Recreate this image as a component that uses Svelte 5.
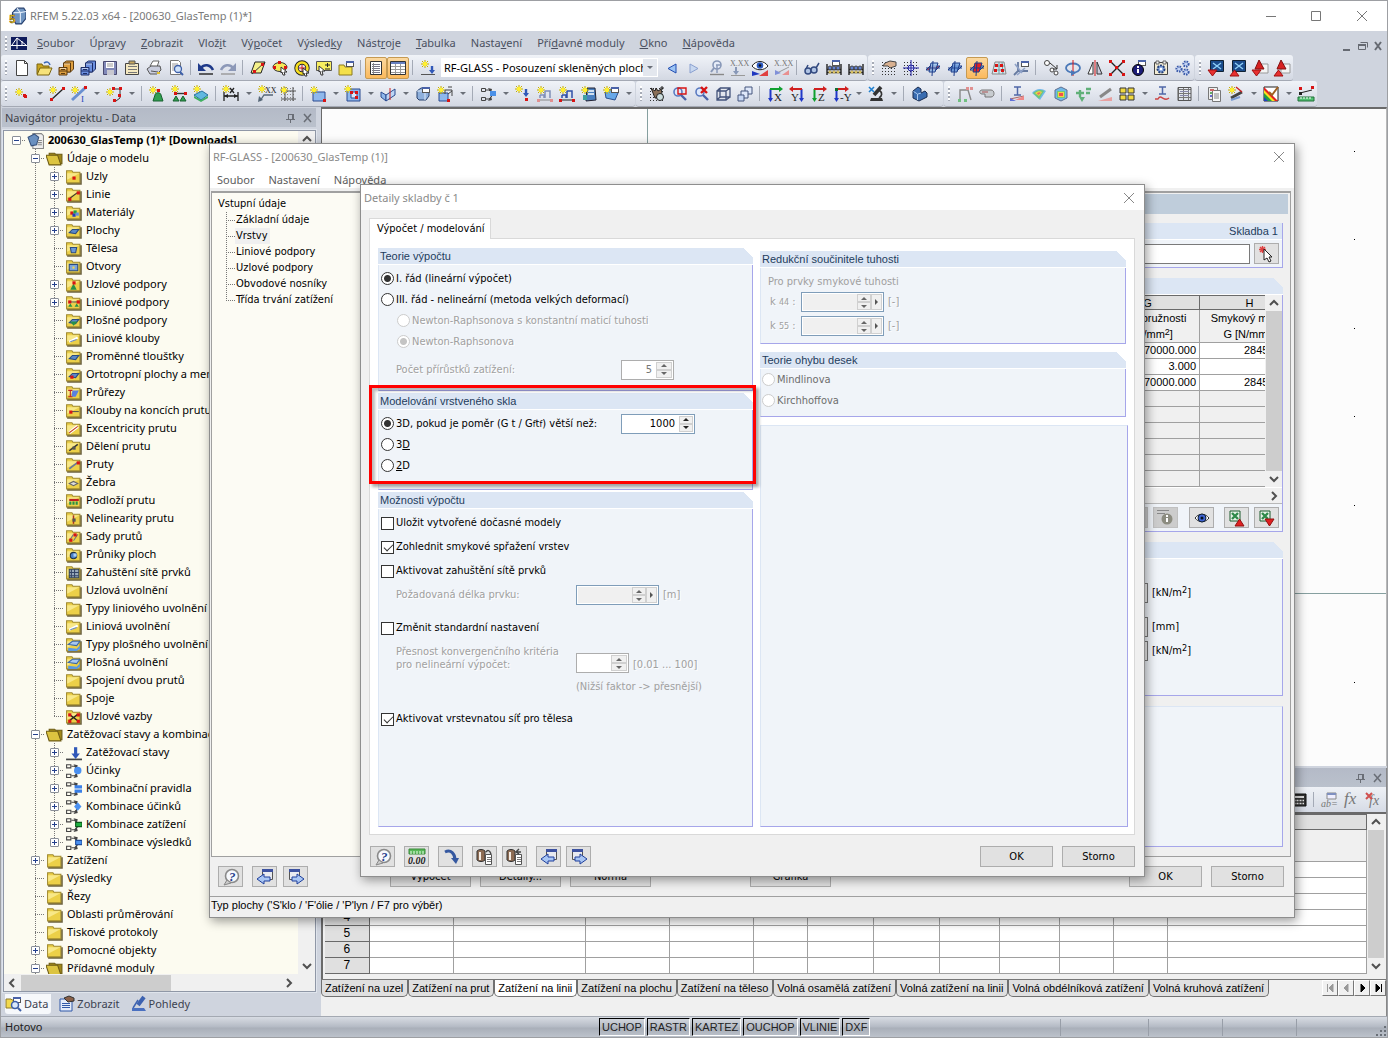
<script>
  // ---- small drawing helpers, all on a 16 x 16 grid ----
  const star = (x, y) =>
    `<path d="M${x} ${y - 4}v8M${x - 4} ${y}h8M${x - 3} ${y - 3}l6 6M${x + 3} ${y - 3}l-6 6" stroke="#c4ac00" stroke-width="1"/><circle cx="${x}" cy="${y}" r="2.300" fill="#fff030"/>`;
  const dot = (x, y, c = '#d81414') => `<rect x="${x}" y="${y}" width="3" height="3" fill="${c}"/>`;
  const ln = (d, c = '#303030', w = 1) => `<path d="${d}" stroke="${c}" stroke-width="${w}" fill="none"/>`;
  const fl = (d, c, s = 'none') => `<path d="${d}" fill="${c}" stroke="${s}"/>`;
  const tx = (x, y, s, t, c = '#222') =>
    `<text x="${x}" y="${y}" font-size="${s}" font-family="Liberation Serif, serif" fill="${c}">${t}</text>`;
  const winBox = (x, y) =>
    `<rect x="${x}.5" y="${y}.5" width="7" height="5" fill="#fff" stroke="#555"/><path d="M${x} ${y + 1}h8" stroke="#4a62a8" stroke-width="2"/>`;
  const folder = ln('M15 5v10H2', '#6b6240', 1.6) + fl('M1.500 2.500h5l1 1.500h6.500v10h-12.500z', '#ecd048', '#a08a30') + fl('M2 5h11.500L2 11z', '#f8e888');
  const comb = ln('M1.500 2.500h4v3h-4zM1.500 11.500h4v3h-4z', '#444') + ln('M6 4h3l3 3M6 13h3l3-3', '#444') + fl('M8 2l4 1-1 4zM8 15l4-1-1-4z', '#444');
  const magn = (c = '#5a7ac0') => `<circle cx="7" cy="6" r="4" fill="#dfe9fb" stroke="${c}" stroke-width="1.600"/>` + ln('M10 9l5 5', '#4a62a8', 2.4);
  const plane = (top, side) =>
    fl('M1 10l4-4h10l-4 4z', top, '#1c3c8a') + fl('M6 3h7l-3 9H4z', side, '#1c3c8a') + ln('M1 8h14M8 1l-1 15', '#1c3c8a');
  const axis = (l, v, h, left) =>
    (left ? ln('M12.500 3v11', v, 2) + ln('M13 3H3', h, 2) + fl('M0 3l4-3v6z', h) : ln('M3.500 3v11', v, 2) + ln('M3 3h10', h, 2) + fl('M16 3l-4-3v6z', h)) +
    (left ? fl('M10 12h5l-2.500 4z', v) + tx(2, 15, 11, l) : fl('M1 12h5l-2.500 4z', v) + tx(7, 15, 11, l));
  const cab = (a, b) =>
    fl('M5.500 3l3-2h7v8l-3 3h-7z', a, b) + fl('M5.500 3h7v9h-7z', a, b) + ln('M6 4h6', '#fff8') + fl('M1 7.500h8v7.500H1z', a, b) + ln('M1 11h8M3 9.500h4M3 13.500h4', b) + ln('M2 8.500h6', '#fff8');
  const cube = (c) => fl('M2 5l4-3h8v8l-3 4H4l-2-2z', c, '#26406e') + ln('M2 5h8v9M10 5l4-3', '#dfeaf8');
  const load = ln('M1 14.500h15', '#444', 1.6) + ln('M10 3v7', '#3058b8', 3) + fl('M6 9h8l-4 5z', '#3058b8');
  const redTri = (up) => (up ? fl('M4.500 10l4.500 6H0z', '#e83030', '#a01010') : fl('M4.500 16L9 10H0z', '#e83030', '#a01010'));
  const people = (c) =>
    ln('M1 4v11M15 4v11M1 12.500h14M1 9.500h14', '#222', 1.4) + [4, 8, 12].map((x) => `<circle cx="${x}" cy="8" r="2" fill="${c}" stroke="#444"/><circle cx="${x}" cy="12" r="1.500" fill="#d8c060"/>`).join('');
  const cell = ln('M2 3.500h13M2 7.500h13M2 11.500h13', '#777') + ln('M2.500 2v13M7.500 2v13M12.500 2v13', '#777') + ln('M2 1.500h13v13h-13z', '#555');
  const dots = Array.from({ length: 25 }, (_, i) => `<rect x="${1 + (i % 5) * 3}" y="${2 + Math.floor(i / 5) * 3}" width="1" height="1" fill="#333"/>`).join('');

  const I = {
    page: fl('M2.500 .5h8l3 3v12h-11z', '#fff', '#444') + ln('M10.500 .5v3h3', '#444'),
    open: fl('M1 4h5l1 2h6v8H1z', '#c9a520', '#7a6410') + fl('M4 8h12l-3 7H1z', '#f6e27a', '#7a6410') + ln('M8 3c3-2 5-1 6 2', '#3a68b8', 1.6),
    cabA: cab('#dfa040', '#5e3c10'), cabB: cab('#6c90e0', '#1c2c66'),
    save: fl('M1.500 1.500h13v13h-13z', '#8088b8', '#4a4a70') + fl('M4 2h8v6H4z', '#fff') + fl('M5 10h7v5H5z', '#c8c8d0') + ln('M5 4h6M5 6h6', '#999'),
    clip: fl('M1.500 3.500h13v11h-13z', '#f4e8c0', '#444') + ln('M4 6.500h9M4 9.500h9M4 12.500h9', '#777') + fl('M5 1h6v3H5z', '#c8a860', '#555'),
    print: fl('M4 6l3-5h6l-2 6z', '#fff', '#666') + fl('M1 9l4-3h9l1 4-4 4H4z', '#c9cddd', '#555') + ln('M5 11l7 1', '#555') + fl('M11 12h3v2h-3z', '#e0c030'),
    preview: fl('M2.500 .5h8l2 2v12h-10z', '#fff', '#777') + ln('M4 4h6M4 6h4M4 8h4M4 10h4', '#999') + '<circle cx="10" cy="9" r="3.500" fill="#cfe2fa" stroke="#3d5fa8" stroke-width="1.300"/>' + ln('M12 12l3 3', '#3d5fa8', 2),
    undo: ln('M3 8c3-4 9-4 12 2', '#1f3a8a', 2.6) + fl('M0 3v8h8z', '#1f3a8a') + ln('M1 14h14', '#222', 1.4),
    redo: ln('M13 8C10 4 4 4 1 10', '#8c98b8', 2.6) + fl('M16 3v8H8z', '#8c98b8') + ln('M1 14h14', '#999', 1.4),
    para: fl('M5 2h10l-4 11H1z', '#f4f08a', '#222') + ln('M2 14L15 2', '#333') + dot(3, 10) + dot(11, 3),
    ell: '<ellipse cx="8" cy="7" rx="7" ry="4.500" fill="#f6e85a" stroke="#333"/>' + dot(6, 1) + dot(1, 6) + dot(12, 6) + fl('M9 7l6 5-3 0 1 3-2 0-1-3-1 1z', '#fff', '#333'),
    ring: '<circle cx="8" cy="8" r="5.500" fill="none" stroke="#222" stroke-width="4.400"/><circle cx="8" cy="8" r="5.500" fill="none" stroke="#f8e020" stroke-width="2.600"/>' + ln('M8 5v6M5 8h6', '#d81414') + fl('M9 8l6 5-3 0 1 3-2 0-1-3-1 1z', '#fff', '#333'),
    pm: fl('M.5 1.500h15v9H.5z', '#f8ee60', '#555') + ln('M9 5h5M11.500 3v4M9 9h5', '#222') + fl('M3 6l6 5-3 0 1 4-2 0-1-4-1 1z', '#fff', '#333'),
    fwin: fl('M1 5h5l1 2h7v8H1z', '#f4e04a', '#8b7b20') + winBox(8, 1),
    list: fl('M2.500 1.500h11v13h-11z', '#fff', '#333') + ln('M4 4.500h8M4 6.500h8M4 8.500h8M4 10.500h8M4 12.500h8', '#778') + ln('M5.500 3v11', '#888'),
    grid: fl('M.5 1.500h15v13H.5z', '#fff', '#333') + fl('M1 2h14v2H1z', '#6880c0') + ln('M1 6.500h14M1 9.500h14M1 12.500h14M5.500 4v10M10.500 4v10', '#999'),
    starload: star(5, 4) + ln('M1 14.500h14', '#555') + ln('M12 6v5', '#3058b8', 2.4) + fl('M9 10h6l-3 4z', '#3058b8'),
    prev: fl('M12 4v9L4 8.500z', '#9cc4f4', '#1f4bb0'), next: fl('M4 4v9l8-4.500z', '#c8d8f0', '#8aa0d0'),
    look: '<circle cx="9" cy="5" r="4" fill="#e6ecf8" stroke="#8898b8" stroke-width="1.600"/>' + ln('M6 8l-3 4', '#8898b8', 2) + ln('M8 5h5M9 5v8', '#8898b8', 1.4) + ln('M2 14.500h14', '#888', 1.4),
    xld: tx(0, 6, 8, 'X.XX', '#777') + ln('M6 7v5', '#8898b8', 2) + fl('M3 11h6l-3 4z', '#8898b8') + ln('M1 15.500h14', '#999'),
    eye: fl('M0 6c4-6 12-6 16 0-4 5-12 5-16 0z', '#fff', '#222') + '<circle cx="8" cy="5.500" r="3.300" fill="#2a58c0"/><circle cx="8" cy="5.500" r="1.300" fill="#111"/>' + fl('M0 16v-5l8 3z', '#2038c0') + fl('M16 10v6H7z', '#e04040'),
    xx: tx(0, 6, 8, 'X.XX', '#777') + ln('M1 14L15 7', '#999') + fl('M1 10v5l6-2z', '#8090d8') + fl('M15 10v5H8z', '#e89090'),
    glasses: '<circle cx="4" cy="11" r="3" fill="#b0c4e4" stroke="#334a80" stroke-width="1.500"/><circle cx="10" cy="10" r="3" fill="#b0c4e4" stroke="#334a80" stroke-width="1.500"/>' + ln('M12 8l3-5M2 9l2-4', '#334a80', 1.5),
    peo1: people('#6080d0') + winBox(6, 0), peo2: people('#6080d0'),
    hand: dots + fl('M4 3l5-2 6 1v4l-6 2-2-2H2z', '#d8b090', '#444'),
    gridc: dots + '<circle cx="8" cy="8" r="3" fill="#dfe6fb" stroke="#2020a0"/>' + ln('M8 0v16M0 8h16', '#2020a0'),
    pl1: plane('#e85050', '#9cc4eecc'), pl2: plane('#9cc4ee', '#6fa0e0cc'), pl3: plane('#9cc4ee', '#e82020'),
    mesh: fl('M4 2h9l2 12H1z', '#dde4ea', '#888') + ln('M3 6h11M2 10h12M8 2v12M11 2l1 12', '#68a0a8') + dot(4, 4) + dot(9, 4) + dot(3, 9) + dot(10, 9),
    xwin: ln('M5 2v9h10M5 11l-4 4', '#667aa0', 1.8) + ln('M2 4l7 9M12 8L4 15', '#8fa2c8', 1.6) + winBox(8, 1),
    copy: '<circle cx="4" cy="3" r="2.500" fill="#fff" stroke="#444"/><circle cx="9" cy="10" r="2" fill="#fff" stroke="#444"/><circle cx="13" cy="13" r="2" fill="#fff" stroke="#444"/>' + ln('M7 3l7 6M14 5v4h-4', '#333'),
    rot: '<ellipse cx="8" cy="8" rx="7" ry="4.500" fill="none" stroke="#4a78b8" stroke-width="1.800"/>' + ln('M8 0v16', '#d81414', 1) + fl('M6 10l5 3-5 3z', '#4a78b8'),
    mir: fl('M6 2v12H1z', '#fff', '#333') + fl('M10 2v12h5z', '#ccd', '#333') + ln('M8 0v16', '#d81414'),
    cross: ln('M2 2l12 12M14 2L2 14', '#222', 1.4) + dot(0, 0) + dot(13, 0) + dot(0, 13) + dot(13, 13) + dot(6, 6),
    info: winBox(7, 0) + '<circle cx="7" cy="10" r="5.500" fill="#1c1c78" stroke="#000"/>' + ln('M7 6v2M7 9v4', '#fff', 2),
    gear: fl('M1.500 2.500h13v12h-13z', '#f3ecd4', '#444') + fl('M3 1h3v3H3zM10 1h3v3h-3z', '#eee', '#666') + '<circle cx="8" cy="9" r="3.500" fill="#88a8e0" stroke="#24407c" stroke-width="2" stroke-dasharray="2 1"/><circle cx="8" cy="9" r="1.300" fill="#fff"/>',
    gears: ['4 9', '11 4', '11 12'].map((p) => { const [x, y] = p.split(' '); return `<circle cx="${x}" cy="${y}" r="2.600" fill="#c4d4f4" stroke="#3858a8" stroke-width="2" stroke-dasharray="1.500 1"/>`; }).join(''),
    scrD: fl('M2.500 .5h13v11h-13z', '#1a4c8c', '#123') + ln('M5 3l8 6M13 3l-8 6', '#8fd0f8', 1.4) + redTri(false), scrU: fl('M2.500 .5h13v11h-13z', '#1a4c8c', '#123') + ln('M5 3l8 6M13 3l-8 6', '#8fd0f8', 1.4) + redTri(true),
    redD: fl('M7 4h9v9H7z', '#f4f4f4', '#999') + fl('M7 0l5 9H3z', '#d82020', '#801010') + redTri(false), redU: fl('M7 4h9v9H7z', '#f4f4f4', '#999') + fl('M7 0l5 9H3z', '#d82020', '#801010') + redTri(true),
    nNode: star(5, 6) + dot(9, 8) + dot(10, 9), nLine: ln('M2 14L14 3', '#222', 1.3) + star(4, 4) + dot(1, 12) + dot(13, 1),
    nMem: ln('M1 14L14 2', '#6a90d0', 3) + star(4, 4) + dot(13, 0) + tx(10, 16, 9, 'I', '#24b'), nSet: star(4, 6) + ln('M7 3h7v9l-4 3', '#333') + dot(6, 1) + dot(13, 1) + dot(12, 8) + dot(7, 13),
    supN: star(4, 4) + dot(8, 3) + fl('M6 9c0-3 6-3 6 0l2 6H4z', '#30a050', '#186030'), supL: star(4, 3) + ln('M4 7.500h10', '#333', 1.4) + dot(3, 6) + dot(13, 6) + fl('M5 10l3 5H2zM12 10l3 5H9z', '#30a050', '#186030'), supS: star(4, 3) + fl('M1 9l8-4 6 4-7 5z', '#60b8e0', '#2870a0') + fl('M1 10l7 4 7-4v2l-7 4-7-4z', '#40b060'),
    dim: star(3, 3) + ln('M1 6v9M15 6v9M1 10h14', '#222', 1.3) + ln('M7 2l4 5M11 2L7 7', '#222', 1.3) + fl('M1 10l4-2v4zM15 10l-4-2v4z', '#222'), com: star(4, 3) + tx(7, 7, 8, 'XX') + ln('M2 15l4-6h9', '#567', 1.3) + fl('M0 16l1-6 4 4z', '#567'), frame: dots.replaceAll('#333', '#888') + ln('M5 1v14M13 1v14M1 5h15M1 13h15', '#555') + star(4, 4),
    nSurf: fl('M3 6h12v9H3z', '#8fb8ec', '#2a4a90') + star(4, 4) + dot(13, 13), nOpen: fl('M2 3h13v12H2z', '#8fb8ec', '#2a4a90') + fl('M6 6h6v6H6z', '#dbe8f8', '#2a4a90') + star(3, 3) + dot(5, 5) + dot(10, 10) + dot(10, 5),
    fold: fl('M1 6l5 3v6l-5-4z', '#8fb8ec', '#2a4a90') + fl('M6 9l9-6v6l-9 6z', '#bcd6f6', '#2a4a90') + ln('M10 2v12', '#c22'), sol: cube('#8fb0dc') + winBox(7, 1), nSol: fl('M2 7h9v8H2z', '#8fb8ec', '#2a4a90') + ln('M8 4h7v6M8 4v4M11 1h4M11 8l4-3', '#444') + star(4, 4) + dot(10, 13),
    combI: comb + fl('M10 5h6v5h-6z', '#4a90e8'), nLoad: star(4, 3) + ln('M11 3v6', '#3058b8', 2.4) + fl('M8 7h6l-3 4z', '#3058b8') + dot(10, 12),
    ld1: star(4, 4) + ln('M3 9v3M3 9h4v3M8 5v7M8 5h5v7', '#8090b8', 1.5) + ln('M1 14h14', '#888') + dot(0, 13, '#e09090') + dot(13, 13, '#e09090'), ld2: star(4, 4) + ln('M3 9v3M3 9h4v3M8 5v7M8 5h5v7', '#3050a8', 1.5) + ln('M1 14h14', '#222') + dot(0, 13) + dot(13, 13),
    cabS: fl('M6 2h8l1 12-10 1z', '#4a80c0', '#223') + ln('M7 5h6M7 8h6', '#fff', 1.5) + star(4, 4) + fl('M2 9h4v5H2z', '#40a0a0'), surfW: fl('M2 6l6-3 7 4-3 7-9-2z', '#68a8e8', '#2a5090') + star(4, 4) + winBox(8, 1),
    grab: dots + fl('M2 2l4 3 1-3 2 3 3-2 1 4-3 5H6z', '#8a7058', '#222') + '<circle cx="11" cy="11" r="3.500" fill="#cdd" stroke="#222"/>' + ln('M11 2h4M13 0v4', '#222'), zoomR: magn() + ln('M7 2h8v6H7z', '#d81414', 1.4), zoomX: magn() + ln('M8 1l6 6M14 1L8 7', '#d81414', 2.4),
    box: ln('M2 5h9v9H2zM5 2h10v9H5M2 5l3-3M11 5l4-3M11 14l4-3M5 2v9M2 14l3-3', '#44547c', 1.3), boxes: fl('M8 1h7v7H8z', '#dfe8fa', '#44547c') + fl('M4 5h7v7H4z', '#dfe8fa', '#44547c') + fl('M1 9h6v6H1z', '#c8d8f4', '#44547c'),
    axX: axis('X', '#2038c8', '#10a030'), axY: axis('Y', '#2038c8', '#d02020', true), axZ: axis('Z', '#10a030', '#d02020'), axM: axis('-Y', '#2038c8', '#d02020') + dot(2, 2, '#107030'),
    micro: ln('M1 1l5 5M6 1L1 6', '#2080d0', 1.6) + ln('M13 1L6 9', '#333', 3.6) + ln('M11 4c4 3 3 6 0 8', '#333', 1.6) + fl('M3 12h11l1 3H2z', '#333'), pen: fl('M2 5l5-4 3 2v4l4-2 2 2v4l-8 4-6-3z', '#3a6cb0', '#1a2c50') + ln('M2.500 5.500l4 2.500v6M7 8l3-1', '#a8c8f0'),
    rf1: ln('M3 14V4h8l3 10', '#888', 1.4) + dot(9, 1, '#e09090') + dot(13, 1, '#e09090') + dot(1, 13, '#70c080') + dot(7, 13, '#70c080'), rf2: fl('M3 4h9c4 0 4 7 0 7H6V8H3c-3 0-3-4 0-4z', '#c8ccd0', '#777') + ln('M3 6h6', '#a55'),
    dI: ln('M5 1h7M8.500 1v8M5 9h7', '#5068a8', 1.5) + ln('M1 13L15 10', '#a66') + fl('M15 10v4H6z', '#f08888') + fl('M1 15h6l-6-3z', '#6070d8'), dS: fl('M1 7c4-5 10-5 14-2l-6 9z', '#70b8e8') + fl('M2 7c4-3 8-4 11-2l-5 8z', '#70c878') + fl('M4 7c3-2 5-2 7-1l-3 4z', '#f0d840') + fl('M6 7c2-1 3-1 4 0l-3 2z', '#e87060'), dC: fl('M2 4l6-3 6 3v8l-6 3-6-3z', '#70b8e8', '#607090') + fl('M4 5h8v7H4z', '#70c878') + fl('M5 6h6v5H5z', '#f0d840') + fl('M6 7h4v3H6z', '#f05050'),
    dG: ln('M5 4v7M1 7h8M11 3h5M11 7h4', '#60b078', 2.4) + fl('M4 11h6l-3 5z', '#60b078'), dB: ln('M3 11L14 3', '#888', 3) + fl('M1 15h14v-4z', '#e8a0a0'), dY: [0, 1, 2, 3].map((i) => fl(`M${1 + (i % 2) * 8} ${2 + (i > 1 ? 7 : 0)}h6v5h-6z`, '#f0d840', '#333')).join(''),
    dW: ln('M5 1h7M8.500 1v7M5 8h7', '#5068a8', 1.5) + ln('M1 13h3c3-6 6 4 11-1', '#c44', 1.3), dT: cell + ln('M4 5.500h9M4 9.500h9', '#88a'),
    rep: fl('M2.500 1.500h9v12h-9z', '#eee', '#777') + fl('M6.500 4.500h8v11h-8z', '#f8f8f8', '#777') + ln('M4 4h4', '#c66', 2) + ln('M4 7h2', '#6a6', 2) + ln('M4 10h2', '#66c', 2) + ln('M8 8h5M8 10h5M8 12h5', '#888'), wand: star(4, 4) + ln('M3 12L14 6', '#444', 3) + ln('M8 1l6 5', '#c22', 1.4) + ln('M3 14l9-3', '#7a9ad0', 2),
    rain: fl('M1 1h14v14H1z', '#fff', '#222') + fl('M1 1l14 14H1z', '#e82020') + fl('M1 4l11 11H1z', '#f8e020') + fl('M1 7l8 8H1z', '#20a040') + fl('M1 11l4 4H1z', '#2040c0') + ln('M6 6l3 3 6-8', '#a06020', 2), meas: ln('M2 7L14 4', '#222') + dot(1, 1) + dot(1, 6, '#222') + dot(13, 0) + fl('M0 11h16v4H0z', '#50c070', '#207038') + ln('M3 11v2M6 11v2M9 11v2M12 11v2', '#fff'),
    calc: fl('M0 2h15v12H0z', '#333', '#111') + fl('M2 4h11v2H2z', '#ddd') + ln('M2 8.500h11M2 11.500h11', '#eee', 1.6) + ln('M5 7v7M8 7v7M11 7v7', '#333'), ab: fl('M6 1h9v6H6z', '#eef', '#888') + ln('M6 2h9', '#7f90c0', 2) + '<text x="0" y="15" font-size="10" font-style="italic" font-family="Liberation Serif, serif" fill="#777">ab=</text>',
    fx: '<text x="1" y="12" font-size="17" font-style="italic" font-family="Liberation Serif, serif" fill="#777">fx</text>', fxx: '<text x="4" y="13" font-size="14" font-style="italic" font-family="Liberation Serif, serif" fill="#777">fx</text>' + ln('M1 1l6 6M7 1L1 7', '#d05050', 2),
    help: '<circle cx="9" cy="7" r="6.500" fill="#f6f8fc" stroke="#8a8a8a" stroke-width="1.600"/>' + fl('M4 11l-3 5 7-2z', '#ccc', '#888') + '<text x="6" y="12" font-size="13" font-weight="bold" font-style="italic" font-family="Liberation Serif, serif" fill="#24408c">?</text>',
    units: fl('M0 0h16v5H0z', '#58b858', '#3a8a3a') + ln('M2 2v3M5 2v3M8 2v3M11 2v3M14 2v3', '#e8ffe8') + '<text x="-1" y="15" font-size="10" font-weight="bold" font-style="italic" font-family="Liberation Serif, serif" fill="#222">0.00</text>',
    arc: ln('M2 3c6-3 10 2 10 8', '#3558a0', 3) + fl('M8 9h8l-3 6z', '#3558a0'), docA: fl('M0 2c2-2 6-2 8 0v9c-2 2-6 2-8 0z', '#8d6c54', '#333') + ln('M3 3v8', '#f4ece4', 2) + fl('M8.500 5.500h6v10h-6z', '#fff', '#555') + ln('M10 8.500h4M10 10.500h4M10 12.500h4', '#777') + ln('M9 3c2-3 4-1 5 2', '#444', 1.4), docB: fl('M0 2c2-2 6-2 8 0v9c-2 2-6 2-8 0z', '#8d6c54', '#333') + ln('M3 3v8', '#f4ece4', 2) + fl('M8.500 5.500h6v10h-6z', '#fff', '#555') + ln('M10 8.500h4M10 10.500h4M10 12.500h4', '#777') + ln('M9 3h5M12 0l-3 3 3 2', '#444', 1.4),
    bk: fl('M5.500 .5h10v10h-10z', '#e8eaf0', '#555') + ln('M5 1.500h11', '#3d52a0', 3) + fl('M7 5v3h6v4H7v3l-7-5z', '#a9c6f4', '#1f3f9c'), fw: fl('M1.500 .5h10v10h-10z', '#e8eaf0', '#555') + ln('M1 1.500h11', '#3d52a0', 3) + fl('M9 5v3H4v4h5v3l7-5z', '#a9c6f4', '#1f3f9c'),
    pick: ln('M1 1l5 5M6 1L1 6M3.500 0v7M0 3.500h7', '#e04040', 1.4) + fl('M5 3l8 8h-3l2 4-2 1-2-4-3 2z', '#fff', '#222'), infoG: ln('M-1 .5h12M-1 3.500h8', '#888') + '<circle cx="9" cy="9" r="5.500" fill="#8c8c80"/>' + ln('M9 5v2M9 8v4', '#fff', 2), eyeB: fl('M1 8c4-5 10-5 14 0-4 5-10 5-14 0z', '#fff', '#333') + '<circle cx="8" cy="8" r="4" fill="#3f63d0" stroke="#123"/><circle cx="8" cy="8" r="1.500" fill="#012"/>',
    xlU: fl('M1 1h10v10H1z', '#e8f4ea', '#1a5a2c') + ln('M3 3l6 6M9 3L3 9', '#2f8a4a', 2.4) + fl('M6 16h9l-4.500-7z', '#e02020', '#901010'), xlD: fl('M1 1h10v10H1z', '#e8f4ea', '#1a5a2c') + ln('M3 3l6 6M9 3L3 9', '#2f8a4a', 2.4) + fl('M6 9h9l-4.500 7z', '#e02020', '#901010'),
    app: fl('M4 5l4-4h6l2 3v6l-4 5H7L4 9z', '#6f94c0', '#26406e') + ln('M8 1l3 4v9M11 5l5-1M5 5h6', '#dfeaf8') + '<text x="1" y="14" font-size="10" font-weight="bold" font-family="Liberation Sans, sans-serif" fill="#f4c818" stroke="#5a4600" stroke-width=".4">5</text>',
    tData: fl('M0 3h5l1 1h6v8H0z', '#f2d94e', '#8d7a2c') + winBox(7, 1) + '<circle cx="9" cy="9" r="3.500" fill="#dbe9fb" stroke="#3d5fa8" stroke-width="1.500"/>' + ln('M12 12l3 3', '#3d5fa8', 2), tView: fl('M1 3h12v12H1z', '#e4ecfa', '#3058a8') + ln('M3 7.500h8M3 9.500h8M3 11.500h8', '#3058a8') + fl('M5 2l5-2 5 2v3l-6 1z', '#8a6048', '#333'), tLook: ln('M13 1L7 9', '#3d62b0', 4) + ln('M2 12l5-8', '#3d62b0', 1.5) + fl('M1 12h12l2 3H1z', '#4a70c0')
  };

  // toolbar strips: '|' separator, 'v' drop arrow, 'combo' module picker, '*' prefix = pressed
  const bar1 = [
    'page open cabA cabB save clip print preview | undo redo | para ell ring pm fwin | *list *grid | starload combo prev next look xld eye xx | glasses peo1 peo2',
    'hand gridc pl1 pl2 *pl3 mesh xwin | copy rot mir cross info gear gears',
    'scrD scrU redD redU'
  ];
  const bar2 = [
    'nNode v nLine nMem v nSet v | supN supL supS | dim v com frame | nSurf v nOpen v fold v sol nSol v | combI v nLoad ld1 ld2 cabS surfW v',
    'grab zoomR zoomX box boxes | axX axY axZ axM v micro v | pen v',
    'rf1 rf2 | dI dS dC dG dB dY v dW dT | rep wand v rain v meas'
  ];

  const menu = [['', 'S', 'oubor'], ['Úpr', 'a', 'vy'], ['', 'Z', 'obrazit'], ['Vlož', 'i', 't'], ['Vý', 'p', 'očet'], ['Výsled', 'k', 'y'], ['Nást', 'r', 'oje'], ['', 'T', 'abulka'], ['Nasta', 'v', 'ení'], ['Pří', 'd', 'avné moduly'], ['', 'O', 'kno'], ['', 'N', 'ápověda']];

  // tree rows: [level, expander, icon overlay, label]
  const F = (s = '') => folder + s;
  const fOpen = fl('M3 3h5l1 1h6v9H3z', '#a08818', '#6e5c14') + fl('M0 5h11l3 9H3z', '#dcc440', '#6e5c14');
  const surf = fl('M4 10l3-3h6l-3 4z', '#5a88c8', '#2c4c80');
  const tree = [
    [0, '-', fl('M5.500 1.500h8l2 2v12h-10z', '#eee', '#888') + fl('M1 5l6-3 4 3-2 7-5 1z', '#6a90c0', '#34507c') + ln('M10 8h4M10 10h4M10 12h4', '#888'), '200630_GlasTemp (1)* [Downloads]'],
    [1, '-', fOpen, 'Údaje o modelu'],
    [2, '+', F(dot(7, 8)), 'Uzly'], [2, '+', F(ln('M4 12l8-6', '#333') + dot(3, 11) + dot(11, 5)), 'Linie'], [2, '+', F(dot(5, 7) + dot(8, 6, '#20a040') + dot(7, 9, '#2040c0') + dot(10, 8, '#6090e0')), 'Materiály'], [2, '+', F(surf), 'Plochy'],
    [2, '', F(fl('M5 7h6l-1 5H6z', '#6a98d8', '#2c4c80')), 'Tělesa'], [2, '', F(fl('M4 6h8v6H4z', '#7aa4dc', '#2c4c80') + fl('M7 8h2v2H7z', '#f2d94e')), 'Otvory'],
    [2, '+', F(fl('M8 7l3 6H5z', '#289048') + dot(7, 5)), 'Uzlové podpory'], [2, '+', F(ln('M4 7.500h8', '#555') + dot(3, 6) + dot(11, 6) + fl('M5 9l2 3H3zM11 9l2 3H9z', '#289048')), 'Liniové podpory'], [2, '', F(surf + fl('M5 9l3 4 4-4z', '#289048')), 'Plošné podpory'],
    [2, '', F(ln('M4 11l8-4', '#fff', 2) + ln('M5 11l6-2', '#6a88b8')), 'Liniové klouby'], [2, '', F(surf), 'Proměnné tloušťky'], [2, '', F(surf + dot(5, 9)), 'Ortotropní plochy a membrány'], [2, '', F(fl('M7 6h6l-3 6H6z', '#5a80e0') + ln('M5 6v6M3 6h4M3 12h4', '#c02020')), 'Průřezy'],
    [2, '', F(ln('M5 9h8', '#555') + dot(4, 8)), 'Klouby na koncích prutu'], [2, '', F(ln('M4 12l8-6', '#fff', 3) + ln('M4 12l8-6', '#c04020')), 'Excentricity prutu'], [2, '', F(ln('M4 12l8-6', '#333', 1.4) + dot(7, 8, '#555')), 'Dělení prutu'], [2, '', F(ln('M4 12l8-6', '#6a7a98', 1.6) + dot(11, 5)), 'Pruty'],
    [2, '', F(fl('M4 9l4-2 4 2-4 2z', '#ddd', '#666')), 'Žebra'], [2, '', F(ln('M4 7.500h9', '#c02020', 2) + ln('M5 9v3M8 9v3M11 9v3', '#289048', 2)), 'Podloží prutu'], [2, '', F(ln('M8 5v8', '#b03020', 1.4) + dot(7, 8, '#555')), 'Nelinearity prutu'], [2, '', F(ln('M4 12l4-6M8 12l4-6', '#777') + dot(4, 10) + dot(8, 5)), 'Sady prutů'],
    [2, '', F('<circle cx="8" cy="9" r="3" fill="#4a80c8" stroke="#234"/>' + dot(8, 7, '#a8d0f8')), 'Průniky ploch'], [2, '', F(fl('M4 5h9v8H4z', '#9ab', '#345') + ln('M6 5v8M9 5v8M4 8h9M4 11h9', '#346')), 'Zahuštění sítě prvků'], [2, '', F(), 'Uzlová uvolnění'], [2, '', F(), 'Typy liniového uvolnění'],
    [2, '', F(ln('M4 11l8-4', '#fff', 2) + ln('M5 11l6-2', '#6a88b8')), 'Liniová uvolnění'], [2, '', F(fl('M3 8l4-3h7l-3 4z', '#a8c8f0', '#3a68a8') + fl('M3 11l8 1 3-3v3l-3 2H3z', '#5a98e0')), 'Typy plošného uvolnění'], [2, '', F(fl('M3 8l4-3h7l-3 4z', '#a8c8f0', '#3a68a8') + fl('M3 11l8 1 3-3v3l-3 2H3z', '#5a98e0')), 'Plošná uvolnění'],
    [2, '', F(), 'Spojení dvou prutů'], [2, '', F(), 'Spoje'], [2, 'L', F(ln('M4 6l8 6M12 6l-8 6', '#222', 1.3) + dot(3, 5) + dot(11, 5) + dot(3, 11) + dot(11, 11)), 'Uzlové vazby'],
    [1, '-', fOpen, 'Zatěžovací stavy a kombinace'],
    [2, '+', load, 'Zatěžovací stavy'], [2, '+', comb + '<circle cx="12" cy="8" r="3.500" fill="#4a90f0"/>', 'Účinky'], [2, '+', comb + fl('M9 5h7v3H9zM9 9h7v3H9z', '#3a80e8'), 'Kombinační pravidla'], [2, '+', comb + fl('M12 4l3.500 4-3.500 4-3.500-4z', '#4a90f0'), 'Kombinace účinků'], [2, '+', comb + fl('M10 6h6v4h-6z', '#20b040', '#0a5a1c'), 'Kombinace zatížení'], [2, '+L', comb + fl('M10 6h6v4h-6z', '#4a90f0', '#1f4fa0'), 'Kombinace výsledků'],
    [1, '+', F(), 'Zatížení'], [1, '', F(), 'Výsledky'], [1, '', F(), 'Řezy'], [1, '', F(), 'Oblasti průměrování'], [1, '', F(), 'Tiskové protokoly'], [1, '+', F(), 'Pomocné objekty'], [1, '-', fOpen, 'Přídavné moduly']
  ];

  const side = ['Základní údaje', 'Vrstvy', 'Liniové podpory', 'Uzlové podpory', 'Obvodové nosníky', 'Třída trvání zatížení'];
  const sheets = ['Zatížení na uzel', 'Zatížení na prut', 'Zatížení na linii', 'Zatížení na plochu', 'Zatížení na těleso', 'Volná osamělá zatížení', 'Volná zatížení na linii', 'Volná obdélníková zatížení', 'Volná kruhová zatížení'];
  const cols = [45, 84, 132, 84, 84, 54, 66, 66, 60, 60, 54, 54, 199];
  const rows = [1, 2, 3, 4, 5, 6, 7];
  const layers = [['70000.000', '28455.280'], ['3.000', ''], ['70000.000', '28455.280'], ['', ''], ['', ''], ['', ''], ['', ''], ['', ''], ['', '']];
</script>

{#snippet icon(body)}
  <svg class="ic" viewBox="0 0 16 16" width="16" height="16" fill="none" aria-hidden="true">{@html body}</svg>
{/snippet}

{#snippet chev(d)}
  <svg viewBox="0 0 16 16" width="16" height="16" fill="none" stroke="#505050" stroke-width="2" aria-hidden="true"><path d={d} /></svg>
{/snippet}

{#snippet closeX(label)}
  <button class="x" aria-label={label}><svg viewBox="0 0 12 12" width="12" height="12" stroke="#888" fill="none"><path d="M1 1l10 10M11 1L1 11" /></svg></button>
{/snippet}

{#snippet strip(spec)}
  <div class="strip">
    <i class="grip"></i>
    {#each spec.split(' ') as t}
      {#if t === '|'}<i class="sep"></i>
      {:else if t === 'v'}<button class="drop" aria-label="Další"></button>
      {:else if t === 'combo'}
        <div class="combo"><select aria-label="Modul"><option>RF-GLASS - Posouzení skleněných ploch</option></select><i></i></div>
      {:else if t[0] === '*'}<button class="tb on" aria-label={t.slice(1)}>{@render icon(I[t.slice(1)])}</button>
      {:else}<button class="tb" aria-label={t}>{@render icon(I[t])}</button>{/if}
    {/each}
  </div>
{/snippet}

{#snippet spin(id, value, off, side, cls)}
  <span class="spin {cls}" class:off class:side>
    <input {id} {value} disabled={off} />
    <span class="ud"><button aria-label="Zvýšit" disabled={off}><i class="up"></i></button><button aria-label="Snížit" disabled={off}><i class="dn"></i></button></span>
    {#if side}<button class="rt" aria-label="Vybrat" disabled={off}><i></i></button>{/if}
  </span>
{/snippet}

{#snippet pinX()}
  <svg viewBox="0 0 28 12" width="28" height="12" fill="none" stroke="#6a6e76" aria-hidden="true"><path d="M3.500 2v5M7.500 2v5M8.500 2v5M3 2.500h6M1 7.500h9M5.500 8v3" /><path d="M19 2l7 8M26 2l-7 8" stroke-width="1.500" /></svg>
{/snippet}

<div class="app">
  <header class="title">
    <svg viewBox="0 0 16 16" width="18" height="18" fill="none" aria-hidden="true">{@html I.app}</svg>
    <span>RFEM 5.22.03 x64 - [200630_GlasTemp (1)*]</span>
    <svg class="wc" viewBox="0 0 104 12" width="104" height="12" fill="none" stroke="#777" aria-hidden="true"><path d="M1 6.500h10M46.500 1.500h9v9h-9zM92 1l10 10M102 1L92 11" /></svg>
  </header>
  <nav class="menu">
    <i class="grip"></i>
    <svg viewBox="0 0 16 13" width="16" height="13" aria-hidden="true"><rect width="16" height="13" fill="#101c5c" /><path d="M0 8.500h16M6 1v11M6 1L1 8M6 1l9 7M11 4v4" stroke="#fff" fill="none" /></svg>
    {#each menu as [a, u, b]}<button>{a}<u>{u}</u>{b}</button>{/each}
    <svg class="mdi" viewBox="0 0 42 12" width="42" height="12" fill="none" stroke="#666a72" aria-hidden="true"><path d="M2 10h7" stroke-width="2" /><path d="M19.500 2.500h7v5M17.500 4.500h7v5h-7z" /><path d="M17 5h8M34 2l6 8M40 2l-6 8" stroke-width="2" /></svg>
  </nav>
  <div class="bars">{#each bar1 as b}{@render strip(b)}{/each}</div>
  <div class="bars">{#each bar2 as b}{@render strip(b)}{/each}</div>

  <div class="work">
    <aside class="nav">
      <div class="ph"><span>Navigátor projektu - Data</span>{@render pinX()}</div>
      <div class="treebox">
        <div class="treemain">
          <ul class="tree">
            {#each tree as [lv, ex, ico, label]}
              <li class:root={lv === 0}>
                {#if lv > 0}<i class="cell"></i>{/if}
                {#if lv > 1}<i class="cell v"></i>{/if}
                <i class="cell h" class:v={lv > 0 && !ex.includes('L')} class:l={ex.includes('L')}>
                  {#if ex[0] === '+' || ex[0] === '-'}<b class:plus={ex[0] === '+'}></b>{/if}
                </i>
                <svg class="ti" viewBox="0 0 16 16" width="17" height="17" fill="none" aria-hidden="true">{@html ico}</svg>
                <span>{label}</span>
              </li>
            {/each}
          </ul>
          <div class="vs">{@render chev('M4 10l4-4 4 4')}{@render chev('M4 6l4 4 4-4')}</div>
        </div>
        <div class="hs">{@render chev('M10 4L6 8l4 4')}<i class="thumb"></i>{@render chev('M6 4l4 4-4 4')}<em></em></div>
      </div>
      <div class="ntabs">
        <button class="on">{@render icon(I.tData)}Data</button><button>{@render icon(I.tView)}Zobrazit</button><button>{@render icon(I.tLook)}Pohledy</button>
      </div>
    </aside>

    <main class="right">
      <svg class="canvas" aria-hidden="true">
        <path d="M325.500 0v500M600 484.500h900" stroke="#86a0a0" fill="none" />
        {#each [42, 130, 219, 307, 396, 573] as y}<rect x="1032" {y} width="1" height="1" fill="#000" />{/each}
      </svg>
      <section class="tables">
        <div class="ph"><span></span>{@render pinX()}</div>
        <div class="tbar">{#each ['calc', '|', 'ab', 'fx', 'fxx'] as t}{#if t === '|'}<i class="sep"></i>{:else}<button class="tb" aria-label={t}>{@render icon(I[t])}</button>{/if}{/each}</div>
        <div class="sheet">
          <table>
            <colgroup>{#each cols.slice(0, -1) as w}<col style="width:{w}px" />{/each}<col /></colgroup>
            <thead><tr class="h1">{#each cols as c}<th></th>{/each}</tr><tr class="h2">{#each cols as c}<th></th>{/each}</tr></thead>
            <tbody>{#each rows as r}<tr><th>{r}</th>{#each cols.slice(1) as c}<td></td>{/each}</tr>{/each}</tbody>
          </table>
          <div class="vs thumbed">{@render chev('M4 10l4-4 4 4')}<i></i>{@render chev('M4 6l4 4 4-4')}</div>
        </div>
        <div class="stabs">
          {#each sheets as s, i}<button class:on={i === 2}>{s}</button>{/each}
          <span class="pager">
            {#each ['M4.500 3v8M10 3v8L6 7z', 'M9 3v8L5 7z', 'M6 3v8l4-4z', 'M10.500 3v8M5 3v8l4-4z'] as d, i}
              <button aria-label="List {i + 1}" disabled={i < 2}><svg viewBox="0 0 14 14" width="14" height="14"><path {d} /></svg></button>
            {/each}
          </span>
        </div>
      </section>
    </main>
  </div>

  <footer class="status"><span>Hotovo</span>
    <div class="cells">{#each ['UCHOP', 'RASTR', 'KARTEZ', 'OUCHOP', 'VLINIE', 'DXF'] as s}<b>{s}</b>{/each}</div>
    <i class="s1"></i><i class="s2"></i><i class="s2"></i><i class="s3"></i>
    <svg viewBox="0 0 10 10" width="10" height="10" fill="#6a7078" aria-hidden="true"><path d="M8 0h2v2H8zM4 4h2v2H4zM8 4h2v2H8zM0 8h2v2H0zM4 8h2v2H4zM8 8h2v2H8z" /></svg>
  </footer>

  <!-- module window -->
  <section class="win glass">
    <div class="wt"><span>RF-GLASS - [200630_GlasTemp (1)]</span>{@render closeX('Zavřít modul')}</div>
    <div class="wm"><button>Soubor</button><button>Nastavení</button><button>Nápověda</button></div>
    <div class="gbody">
      <div class="gside"><p>Vstupní údaje</p><ul>{#each side as s, i}<li><i></i><span class:sel={i === 1}>{s}</span></li>{/each}</ul></div>
      <div class="gmain">
        <div class="band"></div>
        <div class="gg">
          <div class="grp g1"><h3>Skladba 1</h3><div class="pickrow"><input aria-label="Skladba" /><button class="ib" aria-label="Vybrat v grafice">{@render icon(I.pick)}</button></div></div>
          <div class="grp cut g2"><h3></h3>
            <div class="tw">
              <div class="tclip">
                <table>
                  <colgroup><col /><col class="cg" /><col class="ch" /></colgroup>
                  <thead><tr class="h1"><th></th><th>G</th><th>H</th></tr><tr class="h2"><th></th><th>Modul pružnosti<br />E [N/mm<sup>2</sup>]</th><th>Smykový modul<br />G [N/mm<sup>2</sup>]</th></tr></thead>
                  <tbody>{#each layers as [a, b], i}<tr class:e={i > 2}><td></td><td>{a}</td><td>{b}</td></tr>{/each}</tbody>
                </table>
              </div>
              <div class="vs thumbed">{@render chev('M4 10l4-4 4 4')}<i></i>{@render chev('M4 6l4 4 4-4')}</div>
            </div>
            <div class="ghs">{@render chev('M6 4l4 4-4 4')}</div>
            <div class="gbtn">
              <button class="ib dim" aria-label="Knihovna"></button><button class="ib dim" aria-label="Informace">{@render icon(I.infoG)}</button>
              <button class="ib s wide" aria-label="Zobrazit">{@render icon(I.eyeB)}</button><button class="ib s" aria-label="Export">{@render icon(I.xlU)}</button><button class="ib" aria-label="Import">{@render icon(I.xlD)}</button>
            </div>
          </div>
          <div class="grp cut g3"><h3></h3>
            <div class="un"><input aria-label="Hmotnost" /><span>[kN/m<sup>2</sup>]</span></div>
            <div class="un"><input aria-label="Tloušťka" /><span>[mm]</span></div>
            <div class="un"><input aria-label="Tíha" /><span>[kN/m<sup>2</sup>]</span></div>
          </div>
          <div class="grp g4"></div>
        </div>
      </div>
    </div>
    <div class="gfoot">
      <button class="ib" aria-label="Nápověda">{@render icon(I.help)}</button><button class="ib s" aria-label="Předchozí">{@render icon(I.bk)}</button><button class="ib" aria-label="Následující">{@render icon(I.fw)}</button>
      <button class="pb first">Výpočet</button><button class="pb">Detaily...</button><button class="pb">Norma</button><button class="pb far">Grafika</button>
      <button class="ok push">OK</button><button class="ok">Storno</button>
    </div>
    <div class="gstat">Typ plochy ('S'klo / 'F'ólie / 'P'lyn / F7 pro výběr)</div>
  </section>

  <!-- details dialog -->
  <section class="win dlg">
    <div class="wt"><span>Detaily skladby č 1</span>{@render closeX('Zavřít')}</div>
    <div class="dbody">
      <button class="dtab">Výpočet / modelování</button>
      <div class="panel">
        <div class="colL">
          <fieldset class="grp cut t1"><h3>Teorie výpočtu</h3>
            <label class="r"><input type="radio" name="th" checked />I. řád (lineární výpočet)</label>
            <label class="r"><input type="radio" name="th" />III. řád - nelineární (metoda velkých deformací)</label>
            <label class="r sub off"><input type="radio" name="nr" disabled />Newton-Raphsonova s konstantní maticí tuhosti</label>
            <label class="r sub off"><input type="radio" name="nr" disabled checked />Newton-Raphsonova</label>
            <div class="f lg off"><label for="inc">Počet přírůstků zatížení:</label>{@render spin('inc', '5', true, false, 'w53')}</div>
          </fieldset>
          <fieldset class="grp cut t2"><h3>Modelování vrstveného skla</h3>
            <div class="f wide"><label class="r"><input type="radio" name="md" checked /><span>3D, pokud je poměr (G t / G<small>f</small>t<small>f</small>) větší než:</span></label>{@render spin('ratio', '1000', false, false, 'w74')}</div>
            <label class="r"><input type="radio" name="md" /><span>3<u>D</u></span></label>
            <label class="r"><input type="radio" name="md" /><span><u>2</u>D</span></label>
            <i class="mark"></i>
          </fieldset>
          <fieldset class="grp cut t3"><h3>Možnosti výpočtu</h3>
            <label class="c"><input type="checkbox" />Uložit vytvořené dočasné modely</label>
            <label class="c"><input type="checkbox" checked />Zohlednit smykové spřažení vrstev</label>
            <label class="c"><input type="checkbox" />Aktivovat zahuštění sítě prvků</label>
            <div class="f off"><label for="len">Požadovaná délka prvku:</label>{@render spin('len', '', true, true, 'w83 blue')}<span>[m]</span></div>
            <label class="c gap"><input type="checkbox" />Změnit standardní nastavení</label>
            <div class="f two off"><label for="acc">Přesnost konvergenčního kritéria<br />pro nelineární výpočet:</label>{@render spin('acc', '', true, false, 'w53')}<span>[0.01 ... 100]</span></div>
            <p class="note">(Nižší faktor -&gt; přesnější)</p>
            <label class="c last"><input type="checkbox" checked />Aktivovat vrstevnatou síť pro tělesa</label>
          </fieldset>
        </div>
        <div class="colR">
          <fieldset class="grp cut k"><h3>Redukční součinitele tuhosti</h3>
            <p>Pro prvky smykové tuhosti</p>
            <div class="kf off"><label for="k44">k <small>44</small> :</label>{@render spin('k44', '', true, true, 'w83 blue')}<span>[-]</span></div>
            <div class="kf off"><label for="k55">k <small>55</small> :</label>{@render spin('k55', '', true, true, 'w83 blue')}<span>[-]</span></div>
          </fieldset>
          <fieldset class="grp cut m"><h3>Teorie ohybu desek</h3>
            <label class="r dim"><input type="radio" name="pl" disabled />Mindlinova</label>
            <label class="r dim"><input type="radio" name="pl" disabled />Kirchhoffova</label>
          </fieldset>
          <div class="grp blank"></div>
        </div>
      </div>
      <div class="dfoot">
        {#each [['help', ''], ['units', 's'], ['arc', 's'], ['docA', 's'], ['docB', ''], ['bk', 's'], ['fw', '']] as [k, c]}<button class="ib {c}" aria-label={k}>{@render icon(I[k])}</button>{/each}
        <button class="ok push">OK</button><button class="ok">Storno</button>
      </div>
    </div>
  </section>
</div>

<style>
  :global(body) { margin: 0; background: #fff; }
  * { box-sizing: border-box; }
  .app { --ui: 'Noto Sans', 'Open Sans', sans-serif; --tah: 'DejaVu Sans Condensed', 'Noto Sans', sans-serif; --ar: 'Liberation Sans', Arial, sans-serif;
    position: relative; height: calc(100vh - 3px); display: flex; flex-direction: column; border: 1px solid #9d9fa3; background: #cfd4de; font: 11px/16px var(--ui); color: #000; overflow: hidden; }
  button { font: inherit; color: inherit; padding: 0; border: 0; background: none; flex: none; }
  input, select { font: inherit; margin: 0; padding: 0; border-radius: 0; }
  ul, p, h3, fieldset { margin: 0; padding: 0; border: 0; list-style: none; min-width: 0; }
  svg { display: block; flex: none; }
  .ic { overflow: visible; }

  .title { display: flex; align-items: center; height: 30px; padding: 0 18px 0 7px; gap: 4px; background: #fff; color: #7a7a7a; }
  .wc { margin-left: auto; }
  .menu { display: flex; align-items: center; height: 24px; padding: 0 4px 0 0; color: #4a5060; }
  .menu button { margin-left: 15px; }
  .menu > svg:first-of-type { margin-right: -5px; }
  .menu .mdi { margin: 0 0 3px auto; align-self: flex-end; }
  .bars { display: flex; height: 26px; gap: 1px; }
  .strip { display: flex; align-items: center; height: 26px; border-radius: 3px; background: linear-gradient(#f0f3f8, #dfe3ec 60%, #d3d8e2); border-bottom: 1px solid #a4a9b4; flex: none; }
  .grip { width: 2px; height: 15px; margin: 0 4px; background: repeating-linear-gradient(#fff 0 2px, #a6abb6 2px 4px); flex: none; }
  .strip .tb, .tbar .tb { width: 22px; height: 22px; display: grid; place-items: center; }
  .tb.on { background: linear-gradient(#fcd9a0, #fbb95c); border: 1px solid #c69a52; border-radius: 2px; }
  .sep { width: 1px; height: 15px; margin: 0 4px 0 3px; background: #a4aab6; flex: none; }
  .drop { width: 13px; height: 22px; display: grid; place-items: center; }
  .drop::before { content: ''; border: 3px solid transparent; border-top-color: #6a6f78; border-bottom: 0; }
  .combo { display: flex; width: 217px; height: 19px; margin: 0 3px 0 2px; background: #fff; border: 1px solid #fff; flex: none; }
  .combo select { appearance: none; flex: 1; min-width: 0; border: 0; background: none; padding-left: 2px; font-size: 11px; overflow: hidden; text-overflow: clip; color: #000; }
  .combo i { width: 14px; background: #e3e7ee; display: grid; place-items: center; }
  .combo i::before { content: ''; border: 3px solid transparent; border-top-color: #6a6f78; border-bottom: 0; }

  .work { flex: 1; min-height: 0; display: flex; gap: 5px; }
  .nav { width: 315px; padding: 1px 0 0 1px; display: flex; flex-direction: column; flex: none; }
  .ph { display: flex; justify-content: space-between; align-items: center; height: 19px; padding: 0 3px; background: linear-gradient(#b4bac7, #bac1cc); color: #3c4048; flex: none; }
  .treebox { flex: 1; min-height: 0; margin: 3px 0 0 1px; border: 1px solid #8f97a6; outline: 1px solid #dfe4ec; background: #fcfbf0; display: flex; flex-direction: column; }
  .treemain { flex: 1; min-height: 0; display: flex; }
  .tree { flex: 1; overflow: hidden; min-width: 0; }
  .tree li { display: flex; align-items: center; height: 18px; padding-left: 3px; white-space: nowrap; }
  .root { font-weight: bold; }
  .tree .ti { margin: 0 4px 0 1px; }
  .cell { width: 19px; height: 18px; display: grid; place-items: center; flex: none; background-repeat: no-repeat; }
  .v, .l { background-image: repeating-linear-gradient(#777 0 1px, transparent 1px 2px); background-size: 1px 18px; background-position: 9px 0; }
  .l { background-size: 1px 10px; }
  .h::after { content: ''; width: 10px; height: 1px; grid-area: 1/1; justify-self: end; background: repeating-linear-gradient(90deg, #777 0 1px, transparent 1px 2px); }
  .cell b { grid-area: 1/1; z-index: 1; width: 9px; height: 9px; border: 1px solid #8a8f98; border-radius: 1px; background: linear-gradient(#24408c, #24408c) center/5px 1px no-repeat #fff; }
  .cell b.plus { background: linear-gradient(#24408c, #24408c) center/5px 1px no-repeat, linear-gradient(#24408c, #24408c) center/1px 5px no-repeat #fff; }
  .vs { width: 17px; background: #f0f0f0; display: flex; flex-direction: column; justify-content: space-between; align-items: center; flex: none; }
  .thumbed i { flex: 1; width: 16px; background: #cdcdcd; }
  .hs { display: flex; height: 17px; background: #f0f0f0; align-items: center; }
  .hs .thumb { width: 150px; height: 16px; background: #cdcdcd; margin: 0 auto 0 1px; }
  .hs em { width: 18px; }
  .ntabs { display: flex; gap: 7px; height: 24px; padding: 2px 0 1px 3px; color: #3c4250; }
  .ntabs button { display: flex; align-items: center; gap: 2px; padding: 0 3px 0 1px; height: 20px; }
  .ntabs .on { background: #f6f8fb; border-radius: 0 0 3px 3px; }

  .right { flex: 1; min-width: 0; display: flex; flex-direction: column; }
  .canvas { flex: 1; width: 100%; min-height: 0; background: #fcfcfc; border-top: 2px solid #6a6a6a; border-left: 1px solid #6a6a6a; border-right: 1px solid #b8b8b8; }
  .tables { margin-top: 2px; background: #f0f0f0; border-right: 1px solid #888; }
  .tbar { display: flex; align-items: center; justify-content: flex-end; height: 25px; padding-right: 2px; background: linear-gradient(#eef1f6, #d6dbe5); }
  .sheet { display: flex; border-top: 2px solid #6a6a6a; border-left: 2px solid #6a6a6a; padding: 0 2px 5px 1px; }
  .sheet table { flex: 1; min-width: 0; border-collapse: collapse; table-layout: fixed; font: 12px/15px var(--ar); }
  .sheet td { height: 16px; border: 1px solid #a0a0a0; background: #fff; padding: 0; }
  .sheet th { font-weight: normal; padding: 0; background: #e0e0e0; border: 1px solid #6a6a6a; }
  .sheet tbody th { height: 16px; border-width: 1px 1px 1px 0; }
  .h1 th { height: 15px; }
  .sheet .h2 th { height: 32px; background: #f0f0f0; border-color: #a0a0a0; }
  .stabs { display: flex; height: 37px; align-items: flex-start; font: 11px/16px var(--ar); border-top: 1px solid #777; }
  .stabs > button { height: 17px; padding: 0 4px 0 3px; background: #e0e0e0; border: 1px solid #707070; border-top: 0; border-radius: 0 0 5px 5px; }
  .stabs > .on { background: #fff; }
  .pager { margin-left: auto; display: flex; }
  .pager button { width: 16px; height: 16px; display: grid; place-items: center; background: #f0f0f0; border: 1px solid #fff; border-right-color: #777; border-bottom-color: #777; }
  .pager path { fill: #000; stroke: #000; }
  .pager button:disabled path { fill: #999; stroke: #999; }

  .status { display: flex; align-items: center; height: 21px; padding: 0 1px 0 4px; background: linear-gradient(#d8dce3, #b4bac4 50%, #a9afb9 55%, #bcc2cb); border-top: 1px solid #a4a9b2; color: #222; }
  .status > span { width: 594px; }
  .cells { display: flex; font: 11px/16px var(--ar); }
  .cells b { font-weight: normal; height: 18px; border: 1px solid #000; border-right-color: #fff; border-bottom-color: #fff; padding: 0 2px; margin-right: 2px; }
  .s1 { margin-left: auto; }
  .s1, .s2, .s3 { width: 88px; height: 17px; border-left: 1px solid #989ea8; }
  .s2 { width: 74px; }
  .s3 { width: 80px; }
  .status svg { align-self: flex-end; margin-bottom: 1px; }

  .win { position: absolute; display: flex; flex-direction: column; background: #f0f0f0; border: 1px solid #8e8e8e; box-shadow: 2px 3px 10px #0006; }
  .wt { display: flex; justify-content: space-between; align-items: center; height: 25px; padding: 0 9px 0 3px; background: #fff; color: #8a8a8a; flex: none; }
  .x { padding: 0; display: grid; place-items: center; }
  .glass { left: 208px; top: 142px; right: 92px; bottom: 119px; }
  .wm { display: flex; gap: 14px; padding: 2px 7px 0; height: 19px; background: #fff; color: #5c5c5c; flex: none; }
  .gbody { flex: 1; min-height: 0; display: flex; margin-top: 3px; padding: 0 3px 0 1px; }
  .gside { width: 157px; background: #fcfbf4; border: 1px solid #a0a0a0; border-top: 2px solid #a0a0a0; padding: 3px 0 0 6px; font: 11px/16px var(--tah); white-space: nowrap; flex: none; }
  .gside ul { padding-left: 8px; }
  .gside li { display: flex; align-items: center; height: 16px; background: repeating-linear-gradient(#777 0 1px, transparent 1px 2px) 0 0/1px 16px no-repeat; }
  .gside li:last-child { background-size: 1px 8px; }
  .gside li i { width: 9px; height: 1px; background: repeating-linear-gradient(90deg, #777 0 1px, transparent 1px 2px); }
  .gside .sel { background: #f0f0f0; }
  .gside li span { padding: 0 2px 0 1px; }
  .gmain { flex: 1; min-width: 0; border: 2px solid #a0a0a0; border-width: 2px 1px 1px 0; margin-left: 3px; padding: 1px 2px 9px 2px; display: flex; flex-direction: column; }
  .band { height: 20px; background: #bfcddb; flex: none; }
  .gg { display: flex; flex-direction: column; gap: 10px; padding: 9px 5px 0 3px; flex: 1; min-height: 0; }
  .grp { position: relative; background: #f0f4f9; border: 1px solid #dce6f4; border-right: 1px solid #a6a6ea; border-bottom-color: #a6a6ea; border-top: 0; font: 11px/16px var(--tah); }
  .grp h3 { height: 16px; margin: 0 -1px; padding-left: 2px; background: #dce6f4; color: #1e3c5c; font: 11px/16px var(--ar); border-bottom: 0; box-shadow: 0 1px #fff; }
  .cut > h3 { background: linear-gradient(225deg, #fff 0 7px, #dce6f4 7px); }
  .gg .cut > h3 { background: linear-gradient(225deg, #f0f0f0 0 7px, #dce6f4 7px); }
  .grp.g1 h3 { text-align: right; padding-right: 4px; margin-right: 0; }
  .pickrow { display: flex; gap: 4px; padding: 4px 3px 3px 8px; align-items: center; }
  .pickrow input { flex: 1; height: 20px; border: 1px solid #7a7a7a; background: #fff; }
  .ib { width: 25px; height: 21px; display: grid; place-items: center; background: #e1e1e1; border: 1px solid #adadad; }
  .tw { display: flex; margin-top: 1px; }
  .tclip { flex: 1; min-width: 0; overflow: hidden; }
  .tclip table { width: calc(100% + 35px); table-layout: fixed; border-collapse: collapse; font: 11px/15px var(--ar); }
  .cg { width: 104px; }
  .ch { width: 100px; }
  .tclip th { font-weight: normal; padding: 0; border: 1px solid #a0a0a0; background: #f0f0f0; line-height: 16px; }
  .tclip .h1 th { height: 14px; line-height: 12px; background: #e0e0e0; border-color: #6a6a6a; }
  .tclip .h2 th { height: 33px; }
  .tclip td { height: 16px; padding: 0 3px; text-align: right; border: 1px solid #a0a0a0; background: #fff; line-height: 15px; }
  .tclip .e td { background: #f0f0f0; }
  sup { font-size: 9px; line-height: 0; vertical-align: 3px; }
  .ghs { display: flex; justify-content: flex-end; height: 17px; background: #f0f0f0; border-top: 1px solid #fff; border-bottom: 1px solid #b8b8b8; }
  .gbtn { display: flex; justify-content: flex-end; gap: 5px; padding: 3px 3px 3px 0; }
  .gbtn .s { margin-left: 5px; }
  .gbtn .wide { margin-left: 6px; }
  .gbtn .dim { background: #ccc; border-color: #c0c0c0; }
  .g3 { padding-bottom: 34px; }
  .g3 .un:nth-of-type(1) { margin-top: 25px; }
  .g3 .un:nth-of-type(2) { margin-top: 14px; }
  .g3 .un:nth-of-type(3) { margin-top: 4px; }
  .un { display: grid; grid-template-columns: 1fr 130px; column-gap: 4px; height: 20px; align-items: center; }
  .un input { width: 80px; height: 20px; justify-self: end; border: 1px solid #7a7a7a; background: #f0f0f0; }
  .g4 { flex: 1; min-height: 0; border-top: 1px solid #dce6f4; }
  .gfoot { display: flex; align-items: center; height: 39px; padding: 0 10px 0 8px; font: 11px/16px var(--tah); flex: none; }
  .gfoot .s { margin-left: 9px; }
  .gfoot .ib + .ib:not(.s) { margin-left: 6px; }
  .pb { width: 81px; height: 21px; background: #e1e1e1; border: 1px solid #adadad; margin-left: 9px; }
  .pb.first { margin-left: 82px; }
  .pb.far { margin-left: 99px; }
  .ok { width: 73px; height: 21px; background: #e1e1e1; border: 1px solid #adadad; margin-left: 9px; }
  .push { margin-left: auto; }
  .gstat { height: 21px; border-top: 1px solid #a0a0a0; font: 11px/17px var(--ar); flex: none; padding-left: 1px; }

  .dlg { left: 359px; top: 183px; right: 242px; bottom: 160px; }
  .dbody { flex: 1; min-height: 0; display: flex; flex-direction: column; padding: 8px 9px 9px 8px; font: 11px/14px var(--tah); }
  .dtab { align-self: flex-start; height: 21px; padding: 0 5px 0 7px; background: #fff; border: 1px solid #d9d9d9; border-bottom: 0; margin-bottom: -1px; z-index: 1; }
  .panel { flex: 1; min-height: 0; background: #fff; border: 1px solid #d9d9d9; padding: 9px 6px 7px 8px; display: grid; grid-template-columns: minmax(0, 375fr) minmax(0, 368fr); gap: 7px; }
  .colL, .colR { display: flex; flex-direction: column; min-height: 0; }
  .colL { gap: 2px; }
  .colR { gap: 8px; padding-top: 3px; }
  .colR .cut { margin-right: 2px; }
  .r, .c { display: flex; align-items: center; height: 21px; padding-left: 2px; gap: 2px; white-space: nowrap; }
  .c { height: 24px; }
  .r input, .c input { appearance: none; width: 13px; height: 13px; border: 1px solid #333; background: #fff; flex: none; }
  .r input { border-radius: 50%; }
  .r input:checked { background: radial-gradient(circle, #333 0 3px, #fff 4px); }
  .r input:disabled { border-color: #ccc; }
  .r input:disabled:checked { background: radial-gradient(circle, #c4c4c4 0 3px, #fff 4px); }
  .c input:checked { display: grid; }
  .c input:checked::before { content: ''; width: 8px; height: 4px; margin: 2px 0 0 2px; border: solid #333; border-width: 0 0 1px 1px; rotate: -45deg; }
  .sub { padding-left: 18px; }
  .off { color: #a0a0a0; text-shadow: 1px 1px #fff; }
  .dim { color: #6d6d6d; }
  .t1 h3 { margin-bottom: 4px; }
  .t1 { padding-bottom: 10px; }
  .t2 { padding-bottom: 13px; }
  .t2 h3 { margin-bottom: 4px; }
  .t3 { flex: 1; }
  .t3 h3 { margin-bottom: 3px; }
  .f { display: flex; align-items: center; height: 24px; padding-left: 17px; }
  .f > label { width: 180px; flex: none; }
  .f > span:last-child { margin-left: 4px; }
  .f.lg { height: 21px; margin-top: 7px; }
  .f.lg > label { width: 225px; }
  .f.wide { height: 21px; padding-left: 0; }
  .f.wide > label { width: 242px; }
  .f > .spin:last-child { margin-left: 0; }
  .f.two { height: 28px; align-items: flex-end; margin-top: 5px; line-height: 13px; }
  .two > label, .two > span:last-child { padding-bottom: 2px; }
  .gap { margin-top: 9px; }
  .note { padding-left: 197px; margin-top: 6px; color: #a0a0a0; }
  .last { margin-top: 12px; }
  small { font-size: 9px; }
  .spin { display: inline-flex; height: 20px; border: 1px solid #7f9db9; background: #fff; padding: 1px; flex: none; }
  .spin input { flex: 1; min-width: 0; border: 0; background: none; text-align: right; padding-right: 4px; color: #000; }
  .spin.off { border-color: #adadad; }
  .spin.off input { color: #777; }
  .spin.blue { border-color: #7f9db9; }
  .spin.blue input { background: #f0f0f0; }
  .w53 { width: 53px; }
  .w74 { width: 74px; }
  .w83 { width: 83px; }
  .ud { display: flex; flex-direction: column; width: 14px; background: #f0f0f0; }
  .w53 .ud { width: 16px; }
  .ud button { flex: 1; display: grid; place-items: center; border: 1px solid #d0d0d0; background: #f0f0f0; }
  .up { border: 3px solid transparent; border-top: 0; border-bottom-color: #222; }
  .dn { border: 3px solid transparent; border-bottom: 0; border-top-color: #222; }
  .off .up { border-bottom-color: #666; }
  .off .dn { border-top-color: #666; }
  .rt { width: 11px; display: grid; place-items: center; border: 1px solid #d0d0d0; background: #f0f0f0; }
  .rt i { border: 3px solid transparent; border-right: 0; border-left-color: #555; }
  /* callout frame laid over the layered glass group */
  .mark { position: absolute; inset: -8px -4px 5px -10px; border: 3px solid #f00; box-shadow: 3px 3px 3px #0005, inset 3px 3px 3px #0004; pointer-events: none; z-index: 2; }
  .k p { color: #a0a0a0; padding: 6px 0 0 7px; }
  .k h3, .m h3 { margin-bottom: 1px; }
  .kf { display: flex; align-items: center; height: 24px; padding-left: 9px; }
  .kf label { width: 31px; }
  .kf > span:last-child { margin-left: 4px; }
  .k { padding-bottom: 5px; }
  .m { padding-bottom: 5px; }
  .m .r { padding-left: 1px; }
  .blank { flex: 1; border-top: 1px solid #dce6f4; }
  .dfoot { display: flex; align-items: center; height: 21px; margin-top: 11px; padding-left: 1px; flex: none; }
  .dfoot .s { margin-left: 9px; }
  .dfoot .ib + .ib:not(.s) { margin-left: 5px; }
</style>
